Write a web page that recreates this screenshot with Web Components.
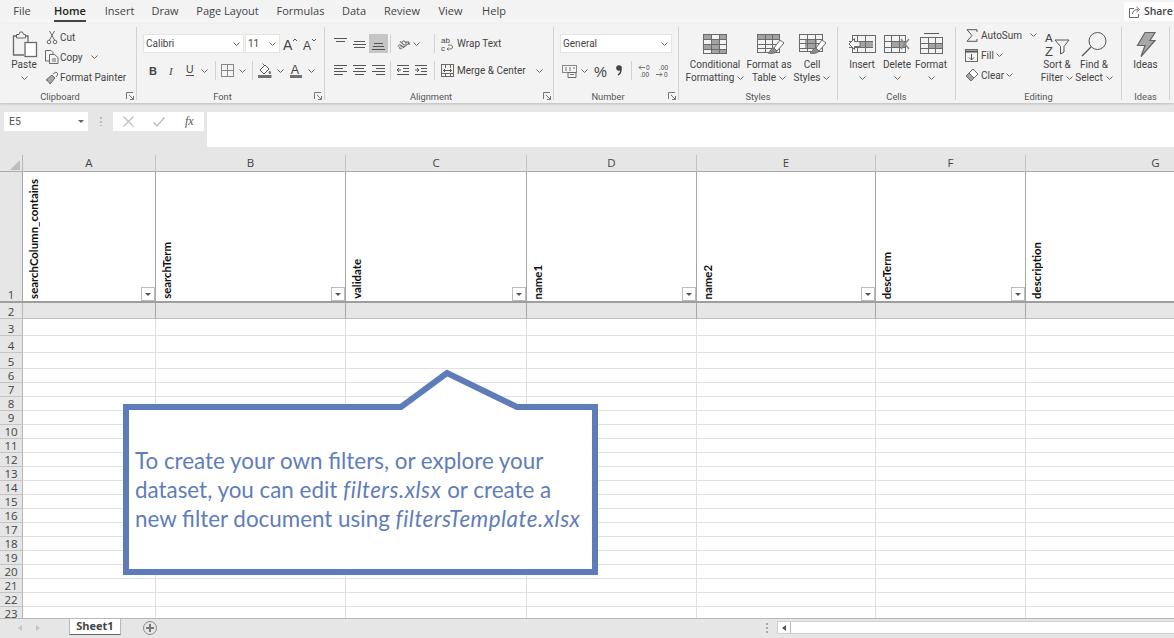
<!DOCTYPE html>
<html lang="en">
<head>
<meta charset="utf-8">
<title>Excel</title>
<style>
  html, body { margin: 0; height: 100%; overflow: hidden; background: #e6e6e6; }
  body { font-family: Roboto, "Liberation Sans", sans-serif; }
  xl-callout i { letter-spacing: .5px; }
</style>
</head>
<body>
<xl-app>
  <xl-tabs></xl-tabs>
  <xl-ribbon>
    <rb-group label="Clipboard" w="137" launcher>
      <rb-big label="Paste" icon="paste" w="48" caret></rb-big>
      <rb-col left="-4">
        <rb-small icon="cut" label="Cut" iw="16" gap="0" w="80"></rb-small>
        <rb-small icon="copy" label="Copy" iw="16" gap="0" w="55" caret></rb-small>
        <rb-small icon="painter" label="Format Painter" iw="16" gap="0" w="85"></rb-small>
      </rb-col>
    </rb-group>

    <rb-group label="Font" w="188" launcher>
      <rb-col top="7" gap="8" left="6">
        <rb-row>
          <rb-combo text="Calibri" w="101"></rb-combo>
          <rb-combo text="11" w="35" ml="1"></rb-combo>
          <rb-tool icon="grow" w="20"></rb-tool>
          <rb-tool icon="shrink" w="18"></rb-tool>
        </rb-row>
        <rb-row>
          <rb-tool icon="bold" w="20"></rb-tool>
          <rb-tool icon="italic" w="18"></rb-tool>
          <rb-tool icon="under" w="17"></rb-tool>
          <rb-tool icon="caret" w="13"></rb-tool>
          <rb-sep ml="4" mr="2"></rb-sep>
          <rb-tool icon="borders" w="18"></rb-tool>
          <rb-tool icon="caret" w="12"></rb-tool>
          <rb-sep ml="4" mr="3"></rb-sep>
          <rb-tool icon="fill" w="17"></rb-tool>
          <rb-tool icon="caret" w="14"></rb-tool>
          <rb-tool icon="color" w="18"></rb-tool>
          <rb-tool icon="caret" w="12"></rb-tool>
        </rb-row>
      </rb-col>
    </rb-group>

    <rb-group label="Alignment" w="229" launcher>
      <rb-col top="7" gap="8" left="6">
        <rb-row>
          <rb-tool icon="atop" w="19"></rb-tool>
          <rb-tool icon="amid" w="19"></rb-tool>
          <rb-tool icon="abot" w="19" selected></rb-tool>
          <rb-sep ml="2" mr="3"></rb-sep>
          <rb-tool icon="orient" w="18"></rb-tool>
          <rb-tool icon="caret" w="8"></rb-tool>
          <rb-sep ml="14" mr="6"></rb-sep>
          <rb-small icon="wrap" label="Wrap Text" iw="12" w="80"></rb-small>
        </rb-row>
        <rb-row>
          <rb-tool icon="aleft" w="19"></rb-tool>
          <rb-tool icon="acenter" w="19"></rb-tool>
          <rb-tool icon="aright" w="19"></rb-tool>
          <rb-sep ml="2" mr="3"></rb-sep>
          <rb-tool icon="outdent" w="18"></rb-tool>
          <rb-tool icon="indent" w="18"></rb-tool>
          <rb-sep ml="4" mr="6"></rb-sep>
          <rb-small icon="merge" label="Merge &amp; Center" iw="12" w="103" caret></rb-small>
        </rb-row>
      </rb-col>
    </rb-group>

    <rb-group label="Number" w="125" launcher>
      <rb-col top="7" gap="8" left="6">
        <rb-row><rb-combo text="General" w="112"></rb-combo></rb-row>
        <rb-row>
          <rb-tool icon="acct" w="19"></rb-tool>
          <rb-tool icon="caret" w="10"></rb-tool>
          <rb-tool icon="percent" w="23"></rb-tool>
          <rb-tool icon="comma" w="14"></rb-tool>
          <rb-sep ml="5" mr="3"></rb-sep>
          <rb-tool icon="decinc" w="18"></rb-tool>
          <rb-tool icon="decdec" w="18"></rb-tool>
        </rb-row>
      </rb-col>
    </rb-group>

    <rb-group label="Styles" w="159">
      <rb-big label="Conditional|Formatting" icon="cond" w="72" inline-caret></rb-big>
      <rb-big label="Format as|Table" icon="fmttable" w="36" inline-caret></rb-big>
      <rb-big label="Cell|Styles" icon="cellstyles" w="50" inline-caret></rb-big>
    </rb-group>

    <rb-group label="Cells" w="118">
      <rb-big label="Insert" icon="insert" w="48" caret></rb-big>
      <rb-big label="Delete" icon="delete" w="22" caret></rb-big>
      <rb-big label="Format" icon="format" w="46" caret></rb-big>
    </rb-group>

    <rb-group label="Editing" w="166">
      <rb-col top="-2" left="8" w="76">
        <rb-small icon="sigma" label="AutoSum" iw="15" gap="2" w="74" caret></rb-small>
        <rb-small icon="fillbox" label="Fill" iw="15" gap="2" w="40" caret></rb-small>
        <rb-small icon="eraser" label="Clear" iw="15" gap="2" w="50" caret></rb-small>
      </rb-col>
      <rb-big label="Sort &amp;|Filter" icon="sort" w="34" inline-caret></rb-big>
      <rb-big label="Find &amp;|Select" icon="find" w="40" inline-caret></rb-big>
    </rb-group>

    <rb-group label="Ideas" w="48">
      <rb-big label="Ideas" icon="bolt" w="47"></rb-big>
    </rb-group>
  </xl-ribbon>

  <xl-formula-bar name="E5"></xl-formula-bar>
  <xl-sheet></xl-sheet>
  <xl-statusbar sheet="Sheet1"></xl-statusbar>

  <xl-callout>
    <div>To create your own filters, or explore your</div>
    <div>dataset, you can edit <i>filters.xlsx</i> or create a</div>
    <div>new filter document using <i>filtersTemplate.xlsx</i></div>
  </xl-callout>
</xl-app>

<script>
// icons are all drawn on the same grey stroke, see the svg() helper
const G = '#6a6a6a';
const svg = (w, h, body) => `<svg width="${w}" height="${h}" viewBox="0 0 ${w} ${h}" fill="none" stroke="${G}" stroke-width="1" style="display:block;overflow:visible">${body}</svg>`;
const lines = (ws) => svg(13, 12, ws.map(([y, a, b]) => `<path d="M${a} ${y}.5H${b}" stroke="#555"/>`).join(''));
const label = (x, y, t, size, extra = '') => `<text x="${x}" y="${y}" font-size="${size}" fill="#444" stroke="none" font-family="Liberation Sans, sans-serif" ${extra}>${t}</text>`;
const grid = (w, h, cols, rows, fills = '') => {
  let s = fills + `<rect x=".5" y=".5" width="${w - 1}" height="${h - 1}"/>`;
  for (let i = 1; i < cols; i++) s += `<path d="M${Math.round(i * w / cols) + .5} 0V${h}"/>`;
  for (let i = 1; i < rows; i++) s += `<path d="M0 ${Math.round(i * h / rows) + .5}H${w}"/>`;
  return s;
};
const brush = `<path d="M23 6l4 3-7 8-3-3z" fill="#fff"/><path d="M17 14c-3 0-3 3-6 5 4 1 8 0 9-2z" fill="#8c8c8c"/>`;

const icons = {
  caret: `<svg width="7" height="4" viewBox="0 0 7 4" fill="none" stroke="#666" style="display:block"><path d="M.5.5l3 3 3-3"/></svg>`,
  paste: svg(26, 27, `<path d="M6 5H2.5v19H13M17 12V5h-4" stroke-width="1.3"/><path d="M5.5 7V3.5h2.5L9 1h2.5l1 2.5h2V7z" fill="#f3f3f3"/><rect x="14" y="11.5" width="11.5" height="14" fill="#fff" stroke-width="1.3"/>`),
  cut: svg(12, 13, `<circle cx="3" cy="11" r="1.8"/><circle cx="9" cy="11" r="1.8"/><path d="M3.5 9L8.5 0M8.5 9L3.5 0"/>`),
  copy: svg(14, 14, `<path d="M4 11H.5V.5H6l2 2V4"/><path d="M4.5 4.5h5l3.5 3v6H4.5z" fill="#f3f3f3"/><path d="M7 9h4M7 11h4"/>`),
  painter: svg(14, 13, `<path d="M1 9l6-5 3 3-5 6c-1-2-2-3-4-4z" fill="#a8a8a8"/><path d="M7 4l3 3M8 3l3-2 2 2-2 3"/>`),
  grow: svg(14, 14, label(0, 13, 'A', 14) + `<path d="M10 4l2-2 2 2" stroke="#555"/>`),
  shrink: svg(13, 12, label(0, 12, 'A', 12) + `<path d="M9 1l2 2 2-2" stroke="#555"/>`),
  bold: svg(8, 11, label(0, 10, 'B', 11, 'font-weight="700"')),
  italic: svg(6, 11, `<text x="0" y="10" font-size="11" fill="#444" stroke="none" font-family="Liberation Serif, serif" font-style="italic">I</text>`),
  under: svg(8, 13, label(0, 9, 'U', 10.5) + `<path d="M0 11.5h8" stroke="#555"/>`),
  borders: svg(13, 13, `<rect x=".5" y=".5" width="12" height="12" stroke="#888"/><path d="M6.5 0v13M0 6.5h13" stroke="#888"/>`),
  fill: svg(14, 15, `<path d="M2 7l5-5 4 4-5 5z" fill="#fff" stroke="#555"/><path d="M6 2L4.5.5"/><path d="M11.5 8c.8 1 1.5 2 .8 2.6-.8.5-1.5-.5-.8-2.6z" fill="#555"/><rect y="12" width="13.5" height="3" fill="#707070" stroke="none"/>`),
  color: svg(12, 15, label(0.8, 11, 'A', 12.5) + `<rect y="12" width="12" height="3" fill="#707070" stroke="none"/>`),
  atop: lines([[0, 0, 13], [3, 2, 11], [6, 0, 0]]),
  amid: svg(13, 12, `<path d="M1 3.5h11M0 6.5h13M1 9.5h11" stroke="#555"/>`),
  abot: svg(13, 12, `<path d="M2 5.5h9M1 8.5h11M0 11.5h13" stroke="#555"/>`),
  aleft: lines([[0, 0, 13], [3, 0, 9], [6, 0, 13], [9, 0, 9]]),
  acenter: lines([[0, 0, 13], [3, 2, 11], [6, 0, 13], [9, 2, 11]]),
  aright: lines([[0, 0, 13], [3, 4, 13], [6, 0, 13], [9, 4, 13]]),
  outdent: svg(12, 11, `<path d="M0 .5h12M6 3.5h6M6 6.5h6M0 9.5h12M4 5H0M2 3L0 5l2 2" stroke="#555"/>`),
  indent: svg(12, 11, `<path d="M0 .5h12M6 3.5h6M6 6.5h6M0 9.5h12M0 5h4M2 3l2 2-2 2" stroke="#555"/>`),
  orient: svg(14, 13, `<text x="1" y="11" font-size="9" fill="#555" stroke="none" font-family="Liberation Sans, sans-serif" transform="rotate(-45 5 8)">ab</text><path d="M7 11l6-5M10 5h3v3" stroke="#555"/>`),
  wrap: svg(12, 14, label(0, 6, 'ab', 8) + label(0, 14, 'c', 8) + `<path d="M7 8h3c2 0 2 4 0 4H6M7.5 10.5L6 12l1.5 1.5" stroke="#777"/>`),
  merge: svg(13, 13, grid(13, 13, 3, 3) + `<rect x="1" y="4" width="11" height="5" fill="#f3f3f3" stroke="none"/><path d="M2 6.5h9M4 5L2.500 6.500 4 8M9 5l1.500 1.500L9 8" stroke="#555"/>`),
  acct: svg(15, 14, `<rect x=".5" y="1.500" width="14" height="7" stroke="#888"/><path d="M3 4h2M7 4h2M11 4h2M3 6h2M7 6h2" stroke="#777"/><path d="M6 8.500h8v5H6z" fill="#f3f3f3"/><path d="M8 10.500h4" stroke="#777"/>`),
  percent: svg(14, 14, label(0, 13, '%', 14.5)),
  comma: svg(6, 11, `<circle cx="3" cy="3" r="2.800" fill="#444" stroke="none"/><path d="M5 4c0 3-1 5-3 6" stroke="#444" stroke-width="1.500"/>`),
  decinc: svg(13, 13, label(8, 6, '0', 6.500) + label(2, 13, '.00', 6.500) + `<path d="M7 3.500H1M3 1.500l-2 2 2 2" stroke="#777"/>`),
  decdec: svg(13, 13, label(3, 6, '.00', 6.500) + label(8, 13, '0', 6.500) + `<path d="M0 10.500h6M4 8.500l2 2-2 2" stroke="#777"/>`),
  cond: svg(24, 20, grid(24, 20, 3, 4, `<path d="M1 1h8v5H1zM9 6h7v4H9zM1 10h15v5H1zM16 1h7v4h-7zM9 15h7v4H9zM16 15h7v4h-7z" fill="#a3a3a3" stroke="none"/>`)),
  fmttable: svg(25, 21, grid(23, 19, 3, 4, `<path d="M1 1h21v4H1z" fill="#a3a3a3" stroke="none"/>`) + brush),
  cellstyles: svg(26, 21, grid(24, 18, 3, 4, `<path d="M6 5h12v9H6z" fill="#a3a3a3" stroke="none"/>`) + brush),
  insert: svg(27, 18, grid(24, 18, 3, 3, `<rect x="8" y="6" width="16" height="6" fill="#a3a3a3" stroke="none"/>`).replace('<rect x=".5"', '<rect x="3.500"') + `<path d="M11 6.500H5.500V3.500L0 9l5.500 5.500V11.500H11z" fill="#f3f3f3"/>`),
  delete: svg(26, 18, grid(22, 18, 3, 3, `<rect x="8" y="6" width="14" height="6" fill="#a3a3a3" stroke="none"/>`) + `<path d="M17 4l8 10M25 4l-8 10" stroke="#8a8a8a" stroke-width="1.500"/>`),
  format: svg(25, 22, `<path d="M5 .5h15" stroke="#555"/><g transform="translate(1 4)">${grid(23, 17, 3, 3, `<rect x="8" y="6" width="15" height="5" fill="#a3a3a3" stroke="none"/>`)}</g>`),
  sigma: svg(12, 13, `<path d="M11 3V.7H1l5 5.800-5 5.800h10V10" stroke="#555"/>`),
  fillbox: svg(13, 13, `<rect x=".5" y=".5" width="12" height="12"/><path d="M0 2.500h13" stroke="#555" stroke-width="2"/><path d="M6.500 5v6M4 8.500l2.500 2.500L9 8.500" stroke="#555"/>`),
  eraser: svg(14, 14, `<path d="M1 8l7-7 5 5-7 7z" fill="#fff"/><path d="M1 8l3-3 5 5-3 3z" fill="#a3a3a3"/>`),
  sort: svg(26, 25, label(1, 10, 'A', 11.500) + label(1, 24, 'Z', 13) + `<path d="M11 8h14l-5 6.500V20l-3.500 2v-7.500z" stroke="#555"/>`),
  find: svg(26, 26, `<circle cx="16.500" cy="10" r="8.500" stroke="#555"/><path d="M10 16L1 25" stroke="#555" stroke-width="1.200"/>`),
  bolt: svg(20, 25, `<path d="M9 .5h10l-5 8h5L5 24.500l4-11H1.500z" fill="#a8a8a8" stroke="#666" stroke-width="1.200"/>`),
  launcher: svg(8, 8, `<path d="M.5 7V.5H7M7.500 7.500L3 3M7.500 4v3.500H4" stroke="#777"/>`),
  cancel: svg(11, 11, `<path d="M.5.5l10 10M10.500.5l-10 10" stroke="#bdbdbd" stroke-width="1.200"/>`),
  enter: svg(12, 10, `<path d="M.5 5.500l3.500 3.500L11.500.5" stroke="#bdbdbd" stroke-width="1.500"/>`),
  share: svg(12, 12, `<path d="M5 2.500H.5v9h9V8M3.500 8c0-3 2-4.500 5.500-4.500M7.500 1L10.500 3.500 7.500 6" stroke="#666"/>`)
};

class XlApp extends HTMLElement {
  constructor() {
    super();
    this.attachShadow({mode: 'open'}).innerHTML = `
    <style>
      :host { display: flex; flex-direction: column; position: relative; width: 1174px; height: 638px; overflow: hidden; background: #e6e6e6; }
    </style><slot></slot>`;
  }
}

class XlTabs extends HTMLElement {
  constructor() {
    super();
    const tabs = [['File', 44], ['Home', 52], ['Insert', 47], ['Draw', 44], ['Page Layout', 81], ['Formulas', 65], ['Data', 42], ['Review', 54], ['View', 43], ['Help', 44]];
    const items = tabs.map(([t, w]) => `<span class="tab ${t == 'Home' ? 'on' : ''}" style="width:${w}px"><b>${t}</b></span>`).join('');
    this.attachShadow({mode: 'open'}).innerHTML = `
    <style>
      :host { display: flex; height: 24px; background: #f3f3f3; font: 11px/22px "Open Sans", sans-serif; color: #444; position: relative; }
      .tab { display: flex; justify-content: center; height: 22px; }
      .tab b { font-weight: 400; height: 22px; box-sizing: border-box; }
      .on { color: #222; }
      .on b { font-weight: 600; border-bottom: 2px solid #444; }
      .share { margin-left: auto; margin-top: 2px; width: 50px; height: 19px; background: #fff; display: flex; align-items: center; gap: 3px; padding-left: 5px; box-sizing: border-box; font-size: 10.5px; font-weight: 600; letter-spacing: -.1px; line-height: 19px; white-space: nowrap; border-radius: 2px 0 0 2px; }
    </style>${items}<span class="share">${icons.share}Share</span>`;
  }
}

class XlRibbon extends HTMLElement {
  constructor() {
    super();
    this.attachShadow({mode: 'open'}).innerHTML = `
    <style>
      :host { display: flex; height: 79px; background: #f3f3f3; box-shadow: 0 1px 2px rgba(0,0,0,.18); position: relative; z-index: 1; padding-top: 3px; box-sizing: border-box; font: 10px/13px Roboto, sans-serif; color: #444; }
    </style><slot></slot>`;
  }
}

class RbGroup extends HTMLElement {
  constructor() {
    super();
    this.attachShadow({mode: 'open'}).innerHTML = `
    <style>
      :host { display: flex; flex-direction: column; position: relative; height: 73px; box-sizing: border-box; border-right: 1px solid #d2d2d2; flex: none; }
      .body { display: flex; height: 64px; flex: none; }
      .foot { height: 12px; line-height: 12px; font-size: 9.3px; text-align: center; white-space: nowrap; color: #555; }
      .launch { position: absolute; right: 2px; bottom: 0; }
    </style>
    <div class="body"><slot></slot></div>
    <div class="foot"></div>`;
  }
  connectedCallback() {
    const w = this.getAttribute('w');
    this.style.width = w + 'px';
    const foot = this.shadowRoot.querySelector('.foot');
    foot.textContent = this.getAttribute('label');
    if (this.hasAttribute('launcher')) {
      foot.style.paddingRight = '16px';
      const l = document.createElement('span');
      l.className = 'launch';
      l.innerHTML = icons.launcher;
      this.shadowRoot.append(l);
    }
  }
}

class RbBig extends HTMLElement {
  constructor() {
    super();
    this.attachShadow({mode: 'open'}).innerHTML = `
    <style>
      :host { display: flex; flex-direction: column; align-items: center; flex: none; white-space: nowrap; }
      .ic { height: 31px; display: flex; align-items: center; justify-content: center; flex: none; padding-top: 3px; box-sizing: border-box; }
      .t { display: flex; align-items: center; gap: 3px; height: 13px; }
      .c { height: 13px; display: flex; align-items: center; }
    </style>
    <div class="ic"></div><div class="txt" style="display:flex;flex-direction:column;align-items:center"></div>`;
  }
  connectedCallback() {
    this.style.width = this.getAttribute('w') + 'px';
    this.shadowRoot.querySelector('.ic').innerHTML = icons[this.getAttribute('icon')];
    const parts = this.getAttribute('label').split('|');
    const inl = this.hasAttribute('inline-caret');
    let html = parts.map((p, i) => `<div class="t">${p}${inl && i == parts.length - 1 ? icons.caret : ''}</div>`).join('');
    if (this.hasAttribute('caret')) html += `<div class="c">${icons.caret}</div>`;
    this.shadowRoot.querySelector('.txt').innerHTML = html;
  }
}

class RbCol extends HTMLElement {
  constructor() {
    super();
    this.attachShadow({mode: 'open'}).innerHTML = `
    <style>:host { display: flex; flex-direction: column; flex: none; }</style><slot></slot>`;
  }
  connectedCallback() {
    if (this.hasAttribute('top')) this.style.marginTop = this.getAttribute('top') + 'px';
    if (this.hasAttribute('left')) this.style.marginLeft = this.getAttribute('left') + 'px';
    if (this.hasAttribute('gap')) this.style.gap = this.getAttribute('gap') + 'px';
    if (this.hasAttribute('w')) this.style.width = this.getAttribute('w') + 'px';
  }
}

class RbRow extends HTMLElement {
  constructor() {
    super();
    this.attachShadow({mode: 'open'}).innerHTML = `
    <style>:host { display: flex; align-items: center; height: 19px; flex: none; }</style><slot></slot>`;
  }
}

class RbSmall extends HTMLElement {
  constructor() {
    super();
    this.attachShadow({mode: 'open'}).innerHTML = `
    <style>
      :host { display: flex; align-items: center; height: 20px; flex: none; white-space: nowrap; }
      .ic { display: flex; justify-content: center; flex: none; margin-right: 4px; }
      .cr { margin-left: auto; width: 10px; display: flex; justify-content: center; }
    </style>
    <span class="ic"></span><span class="t"></span><span class="cr"></span>`;
  }
  connectedCallback() {
    const s = this.shadowRoot;
    this.style.width = this.getAttribute('w') + 'px';
    const ic = s.querySelector('.ic');
    ic.style.width = this.getAttribute('iw') + 'px';
    if (this.hasAttribute('gap')) ic.style.marginRight = this.getAttribute('gap') + 'px';
    ic.innerHTML = icons[this.getAttribute('icon')];
    s.querySelector('.t').textContent = this.getAttribute('label');
    if (this.hasAttribute('caret')) s.querySelector('.cr').innerHTML = icons.caret;
  }
}

class RbTool extends HTMLElement {
  constructor() {
    super();
    this.attachShadow({mode: 'open'}).innerHTML = `
    <style>
      :host { display: flex; align-items: center; justify-content: center; height: 19px; flex: none; }
      :host([selected]) { background: #c6c6c6; }
    </style>`;
  }
  connectedCallback() {
    this.style.width = this.getAttribute('w') + 'px';
    const box = document.createElement('span');
    box.innerHTML = icons[this.getAttribute('icon')];
    this.shadowRoot.append(box);
  }
}

class RbSep extends HTMLElement {
  constructor() {
    super();
    this.attachShadow({mode: 'open'}).innerHTML = `
    <style>:host { display: block; width: 1px; height: 19px; background: #d2d2d2; flex: none; }</style>`;
  }
  connectedCallback() {
    this.style.marginLeft = this.getAttribute('ml') + 'px';
    this.style.marginRight = this.getAttribute('mr') + 'px';
  }
}

class RbCombo extends HTMLElement {
  constructor() {
    super();
    this.attachShadow({mode: 'open'}).innerHTML = `
    <style>
      :host { display: flex; align-items: center; height: 19px; background: #fff; box-sizing: border-box; border: 1px solid #e4e4e4; padding: 0 3px 0 2px; flex: none; font-size: 10px; justify-content: space-between; }
    </style><span></span>${icons.caret}`;
  }
  connectedCallback() {
    this.style.width = this.getAttribute('w') + 'px';
    if (this.hasAttribute('ml')) this.style.marginLeft = this.getAttribute('ml') + 'px';
    this.shadowRoot.querySelector('span').textContent = this.getAttribute('text');
  }
}

class XlFormulaBar extends HTMLElement {
  constructor() {
    super();
    this.attachShadow({mode: 'open'}).innerHTML = `
    <style>
      :host { display: flex; align-items: flex-start; height: 52px; padding: 9px 0 0 4px; box-sizing: border-box; background: #e6e6e6; font: 10.5px/19px Roboto, sans-serif; color: #555; }
      .name { width: 84px; height: 19px; background: #fff; display: flex; align-items: center; justify-content: space-between; padding: 0 4px 0 5px; box-sizing: border-box; }
      .tri { width: 0; height: 0; border: 3px solid transparent; border-top: 3px solid #666; border-bottom: 0; }
      .dots { width: 2px; height: 9px; margin: 5px 11px 0 12px; background: repeating-linear-gradient(#bbb 0 2px, transparent 2px 4px); }
      .btns { width: 91px; height: 19px; background: #fff; display: flex; align-items: center; box-sizing: border-box; padding: 0 0 0 10px; gap: 19px; }
      .fx { font: italic 12px "Liberation Serif", serif; color: #555; margin-left: 1px; }
      .input { flex: 1; height: 35px; margin-left: 3px; background: #fff; }
    </style>
    <div class="name"><span id="n"></span><span class="tri"></span></div>
    <div class="dots"></div>
    <div class="btns">${icons.cancel}${icons.enter}<span class="fx">fx</span></div>
    <div class="input"></div>`;
  }
  connectedCallback() {
    this.shadowRoot.getElementById('n').textContent = this.getAttribute('name');
  }
}

class XlSheet extends HTMLElement {
  constructor() {
    super();
    const cols = ['A', 'B', 'C', 'D', 'E', 'F', 'G'];
    const heads = ['searchColumn_contains', 'searchTerm', 'validate', 'name1', 'name2', 'descTerm', 'description'];
    const heights = [131, 16, 17, 17, 16];
    for (let i = 6; i <= 23; i++) heights.push(14);

    let cells = `<div class="corner"><span></span></div>`;
    cols.forEach(c => cells += `<div class="ch">${c}</div>`);
    heights.forEach((h, r) => {
      const n = r + 1;
      cells += `<div class="rh ${n == 1 ? 'r1' : ''}">${n}</div>`;
      cols.forEach((c, i) => {
        if (n == 1) {
          const btn = i < 6 ? `<span class="flt"></span>` : '';
          cells += `<div class="c r1"><span class="v">${heads[i]}</span>${btn}</div>`;
        } else {
          cells += `<div class="c ${n == 2 ? 'r2' : ''}"></div>`;
        }
      });
    });

    this.attachShadow({mode: 'open'}).innerHTML = `
    <style>
      :host { display: block; height: 463px; overflow: hidden; background: #fff; flex: none; }
      .g { display: grid; grid-template-columns: 23px 133px 190px 181px 170px 179px 150px 260px; grid-template-rows: 17px ${heights.join('px ')}px; font: 12px "Open Sans", sans-serif; color: #444; }
      .corner { background: #e6e6e6; border-right: 1px solid #b5b5b5; border-bottom: 1px solid #ababab; display: flex; align-items: flex-end; justify-content: flex-end; padding: 0 2px 1px 0; }
      .corner span { width: 0; height: 0; border-left: 10px solid transparent; border-bottom: 10px solid #bdbdbd; }
      .ch { background: #e6e6e6; border-right: 1px solid #c4c4c4; border-bottom: 1px solid #ababab; text-align: center; line-height: 16px; font-size: 11.5px; overflow: hidden; }
      .rh { background: #e6e6e6; border-right: 1px solid #b5b5b5; border-bottom: 1px solid #c4c4c4; text-align: center; font-size: 11.5px; display: flex; align-items: flex-end; justify-content: center; line-height: 13px; overflow: hidden; box-sizing: border-box; }
      .rh.r1 { border-bottom: 2px solid #9e9e9e; }
      .c { border-right: 1px solid #e1e1e1; border-bottom: 1px solid #e1e1e1; box-sizing: border-box; min-width: 0; min-height: 0; }
      .r1 { border-right-color: #a6a6a6; border-bottom: 2px solid #9e9e9e; display: flex; align-items: flex-end; justify-content: space-between; padding: 0 0 0 5px; }
      .r1.rh { padding: 0; justify-content: center; }
      .r2 { background: #e6e6e6; border-right-color: #a6a6a6; border-bottom-color: #bdbdbd; }
      .v { writing-mode: vertical-rl; transform: rotate(180deg); font: 700 11.4px/12px Lato, "Liberation Sans", sans-serif; color: #111; white-space: nowrap; padding-top: 2px; }
      .flt { width: 14px; height: 14px; box-sizing: border-box; background: #fff; border: 1px solid #bdbdbd; display: flex; align-items: center; justify-content: center; }
      .flt::after { content: ""; border: 3px solid transparent; border-top: 3px solid #555; border-bottom: 0; }
    </style><div class="g">${cells}</div>`;
  }
}

class XlStatusbar extends HTMLElement {
  constructor() {
    super();
    this.attachShadow({mode: 'open'}).innerHTML = `
    <style>
      :host { display: flex; align-items: flex-start; height: 20px; box-sizing: border-box; border-top: 1px solid #b8b8b8; background: #e6e6e6; flex: none; font: 700 11.5px "Open Sans", sans-serif; color: #444; }
      .nav { width: 69px; display: flex; gap: 14px; padding: 6px 0 0 18px; box-sizing: border-box; }
      .nav i { width: 0; height: 0; border: 3px solid transparent; }
      .nav .l { border-right: 4px solid #c4c4c4; border-left: 0; }
      .nav .r { border-left: 4px solid #c4c4c4; border-right: 0; }
      .sheet { width: 52px; height: 16px; background: #fff; text-align: center; line-height: 14px; border-bottom: 1px solid #666; border-left: 1px solid #b8b8b8; border-right: 1px solid #b8b8b8; box-sizing: border-box; font-size: 11px; }
      .plus { margin: 2px 0 0 22px; width: 14px; height: 14px; border: 1px solid #888; border-radius: 50%; box-sizing: border-box; position: relative; }
      .plus::before { content: ""; position: absolute; left: 2px; right: 2px; top: 5px; height: 2px; background: #777; }
      .plus::after { content: ""; position: absolute; top: 2px; bottom: 2px; left: 5px; width: 2px; background: #777; }
      .dots { margin: 4px 0 0 609px; width: 2px; height: 10px; background: repeating-linear-gradient(#aaa 0 2px, transparent 2px 4px); }
      .bar { margin: 2px 0 0 9px; flex: 1; height: 13px; background: #fff; border: 1px solid #cfcfcf; border-right: 0; box-sizing: border-box; display: flex; }
      .arrow { width: 12px; border-right: 1px solid #bdbdbd; display: flex; align-items: center; justify-content: center; }
      .arrow::after { content: ""; border: 3px solid transparent; border-right: 4px solid #555; border-left: 0; }
    </style>
    <div class="nav"><i class="l"></i><i class="r"></i></div>
    <div class="sheet"></div>
    <div class="plus"></div>
    <div class="dots"></div>
    <div class="bar"><span class="arrow"></span></div>`;
  }
  connectedCallback() {
    this.shadowRoot.querySelector('.sheet').textContent = this.getAttribute('sheet');
  }
}

class XlCallout extends HTMLElement {
  constructor() {
    super();
    this.attachShadow({mode: 'open'}).innerHTML = `
    <style>
      :host { position: absolute; left: 123px; top: 369px; width: 475px; height: 206px; z-index: 2; display: block; font: 22.4px/29px Lato, "Liberation Sans", sans-serif; color: #5f7dba; white-space: nowrap; }
      svg { position: absolute; inset: 0; }
      .t { position: absolute; left: 12px; top: 77px; }
    </style>
    <svg width="475" height="206" viewBox="0 0 475 206"><path d="M3 38H278L324 4 394 38H472V203H3Z" fill="#fff" stroke="#5f7cba" stroke-width="6"/></svg>
    <div class="t"><slot></slot></div>`;
  }
}

customElements.define('xl-app', XlApp);
customElements.define('xl-tabs', XlTabs);
customElements.define('xl-ribbon', XlRibbon);
customElements.define('rb-group', RbGroup);
customElements.define('rb-big', RbBig);
customElements.define('rb-col', RbCol);
customElements.define('rb-row', RbRow);
customElements.define('rb-small', RbSmall);
customElements.define('rb-tool', RbTool);
customElements.define('rb-sep', RbSep);
customElements.define('rb-combo', RbCombo);
customElements.define('xl-formula-bar', XlFormulaBar);
customElements.define('xl-sheet', XlSheet);
customElements.define('xl-statusbar', XlStatusbar);
customElements.define('xl-callout', XlCallout);
</script>
</body>
</html>
